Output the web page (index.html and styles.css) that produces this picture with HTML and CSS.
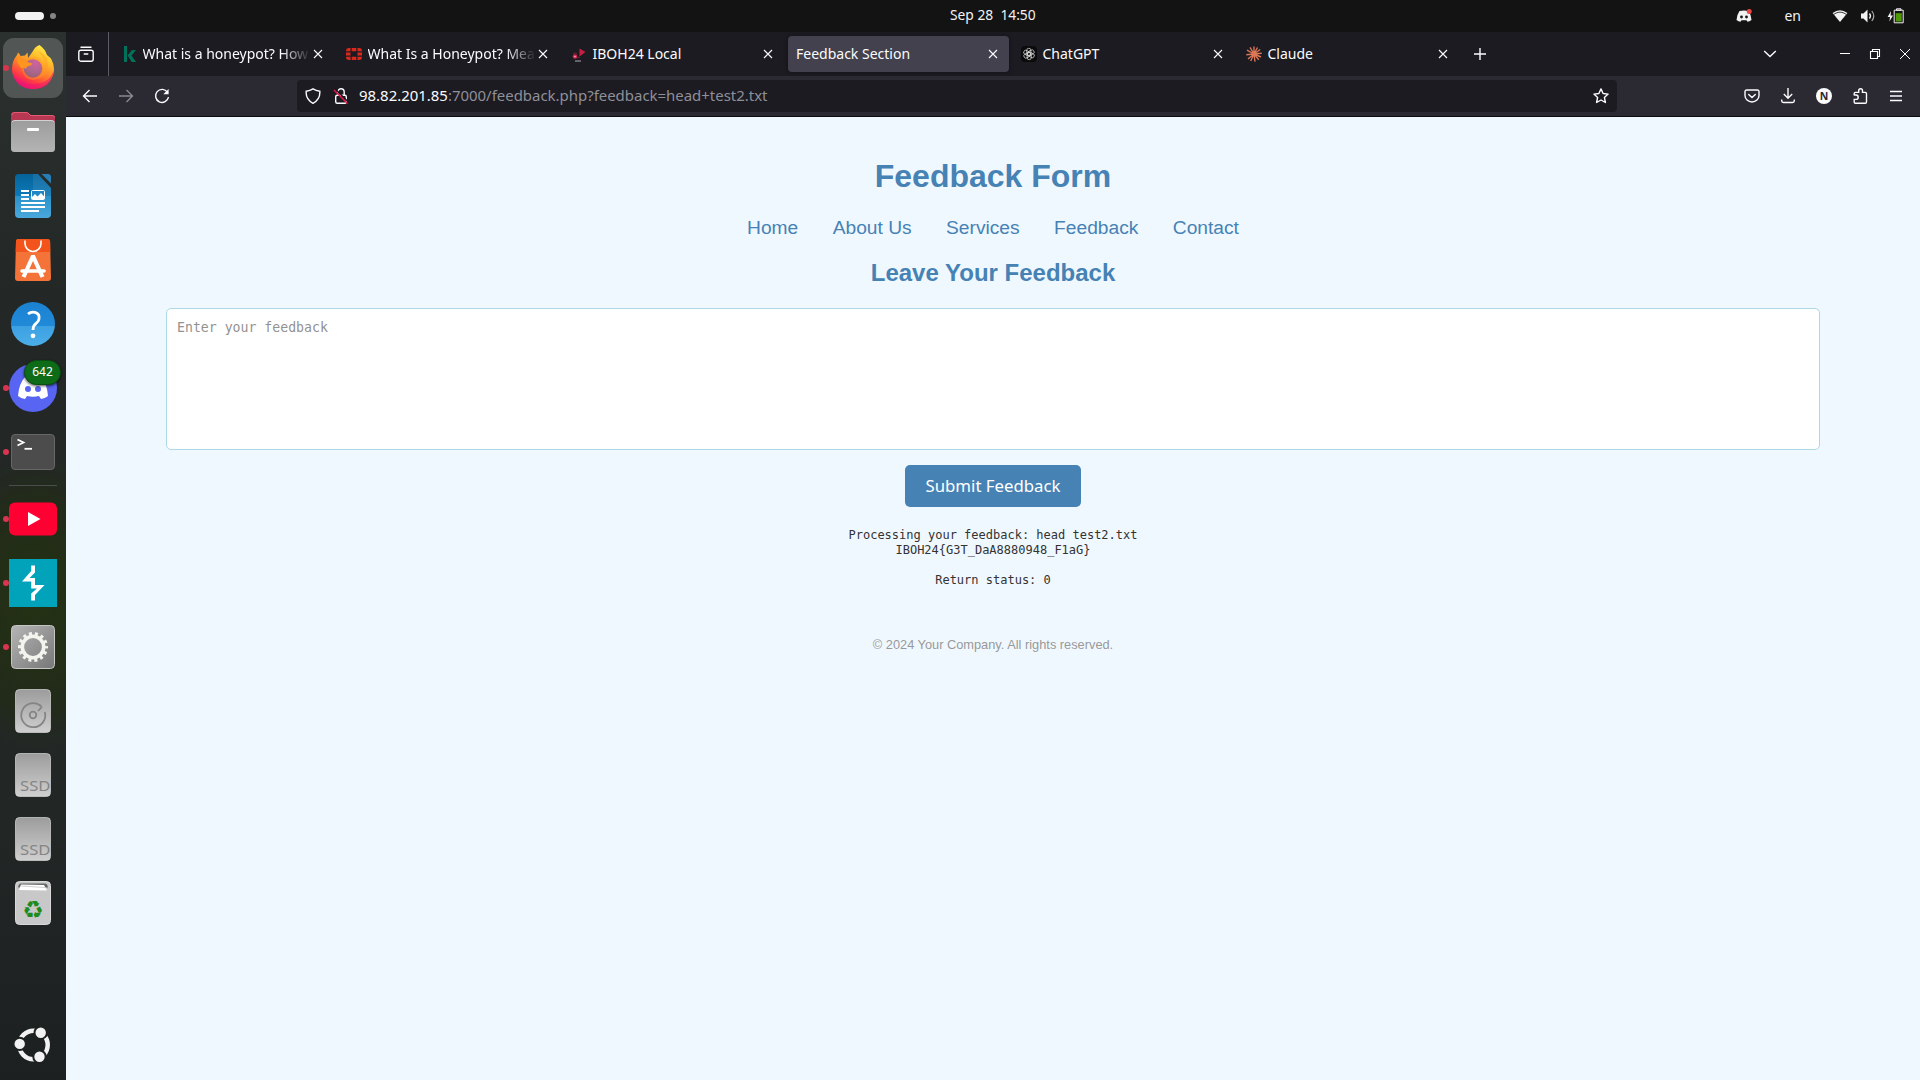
FILE: index.html
```html
<!DOCTYPE html>
<html lang="en">
<head>
<meta charset="utf-8">
<title>Feedback Section</title>
<link rel="stylesheet" href="styles.css">
</head>
<body>
<svg class="defs" width="0" height="0" aria-hidden="true">
  <symbol id="close" viewBox="0 0 10 10"><path d="M1 1l8 8M9 1l-8 8" fill="none" stroke="#fbfbfe" stroke-width="1.1"/></symbol>
  <linearGradient id="metal" x1="0" y1="0" x2="0" y2="1"><stop offset="0" stop-color="#9c9c9c"/><stop offset="1" stop-color="#cfcfcf"/></linearGradient>
  <symbol id="ssd" viewBox="0 0 48 48"><rect x="6.500" y="2.500" width="35" height="43" rx="4" fill="url(#metal)" stroke="#d5d5d5" stroke-opacity=".7"/></symbol>
</svg>

<header class="topbar">
  <div class="workspaces"><span class="pill"></span><span class="dot"></span></div>
  <div class="clock">Sep 28&nbsp; 14:50</div>
  <div class="tray">
    <svg class="tray-discord" width="16" height="14" viewBox="0 0 16 14"><path d="M3.500 2Q8 .8 12.500 2Q15.300 6 15.500 11Q13.500 12.500 11.500 12.700L10.500 11.200H5.500L4.500 12.700Q2.500 12.500 .5 11Q.7 6 3.500 2z" fill="#f2f2f2"/><circle cx="5.500" cy="8" r="1.400" fill="#131313"/><circle cx="10.500" cy="8" r="1.400" fill="#131313"/><circle cx="13.200" cy="2.500" r="2.500" fill="#f04747"/></svg>
    <span class="lang">en</span>
    <svg class="tray-wifi" width="16" height="14" viewBox="0 0 16 14"><path d="M8 13L.6 4Q8-1.500 15.400 4z" fill="#f2f2f2"/><path d="M2 5.200Q8 1 14 5.200" fill="none" stroke="#131313" stroke-width=".8"/></svg>
    <svg class="tray-sound" width="16" height="14" viewBox="0 0 16 14"><path d="M1 4.500h2.500L7.500.5v13L3.500 9.500H1z" fill="#f2f2f2"/><path d="M9.500 4.500q2 2.500 0 5" fill="none" stroke="#f2f2f2" stroke-width="1.300"/><path d="M11.800 2q4 5 0 10" fill="none" stroke="#aaa" stroke-width="1.200"/></svg>
    <svg width="18" height="16" viewBox="0 0 18 16"><path d="M4 3L.6 9H3l-.6 4.500L6 7.500H3.600z" fill="#f2f2f2"/><path d="M7.200 2.200h9v12.600h-9zM9.500.8h4.500v1.400H9.500z" fill="none" stroke="#f2f2f2"/><rect x="8.700" y="5.200" width="6" height="8.300" fill="#4e9a06"/></svg>
  </div>
</header>

<div class="desktop">
  <nav class="dock">
    <div class="slot running focused"><svg viewBox="0 0 48 48">
      <defs><linearGradient id="ff1" x1=".85" y1="0" x2=".35" y2="1"><stop offset="0" stop-color="#fff44f"/><stop offset=".3" stop-color="#ffc12c"/><stop offset=".6" stop-color="#ff7a2b"/><stop offset=".82" stop-color="#ff3647"/><stop offset="1" stop-color="#e01080"/></linearGradient><radialGradient id="ff2" cx=".65" cy=".2" r=".9"><stop offset="0" stop-color="#b33bf0"/><stop offset=".5" stop-color="#7a45d8"/><stop offset="1" stop-color="#4b3ca8"/></radialGradient></defs>
      <path d="M30.500 1Q36 5 38 11L42 14.500Q45 20 45 25C45 36 35.500 45 24 45S3 36 3 25Q3 17 8 11L9 8.500Q11 10 11.500 12L16 11.500L18.500 8.500L19 14Q22 10 24 7Q26 2.500 30.500 1z" fill="url(#ff1)"/>
      <path d="M3.500 27Q6 40 24 40Q40 40 44.500 27Q43 45 24 45Q6 45 3.500 27z" fill="#f0146f" opacity=".55"/>
      <circle cx="24" cy="24.500" r="9.300" fill="url(#ff2)"/>
      <path d="M18 15Q25 11 31 15L34 19Q34 27 33 28Q38 20 33 12L29 7Q33 8 38 14Q42 34 24 36Q13 35 13 23L18 15z" fill="#ff9a22" opacity=".4"/>
      <path d="M8 12L18 15.500L18.500 18L23.500 19.500Q22.500 21.500 19.500 22Q17 23 17 25Q14 23 12 24L9 20z" fill="#ff9420"/>
    </svg></div>
    <div class="slot"><svg viewBox="0 0 48 48">
      <defs><linearGradient id="fd" x1="0" y1="0" x2="0" y2="1"><stop offset="0" stop-color="#9c9c9c"/><stop offset="1" stop-color="#b4b4b4"/></linearGradient></defs>
      <path d="M2 12V7q0-3 3-3h12q2 0 3 1.200L22 7h21q3 0 3 3v6H2z" fill="#b83752"/><path d="M3 7q0-2.500 3-2.500h11q2 0 3 1.500l1.500 1.500H43q2.500 0 2.500 2" fill="none" stroke="#e45a73"/>
      <rect x="2" y="12" width="44" height="32" rx="3.500" fill="url(#fd)"/><path d="M3 14q1-1.500 3-1.500h36q2 0 3 1.500" fill="none" stroke="#d2d2d2"/><rect x="18" y="20" width="12" height="3" rx="1" fill="#fff"/>
    </svg></div>
    <div class="slot"><svg viewBox="0 0 48 48">
      <defs><linearGradient id="wr" x1="0" y1="0" x2="0" y2="1"><stop offset="0" stop-color="#05639a"/><stop offset=".5" stop-color="#0d7ab8"/><stop offset=".5" stop-color="#2a91ca"/><stop offset="1" stop-color="#4aa9dc"/></linearGradient></defs>
      <path d="M10 2h19l13 14v26q0 4-4 4H10q-4 0-4-4V6q0-4 4-4z" fill="url(#wr)"/><path d="M32.500 2H39q3 0 3 3v6.500z" fill="#267eb4"/><path d="M24 2h5l13 14v8H24z" fill="#fff" opacity=".08"/>
      <path d="M12 19h8M12 23h8M12 27h8M12 31h24M12 35h24M12 39h18" stroke="#fff" stroke-width="2"/><rect x="22.500" y="18.500" width="13" height="9" rx="1" fill="#1f88c4" stroke="#fff"/><path d="M23 27v-2l3-3 2.500 2.500L32 21l3.500 4v2z" fill="#fff"/>
    </svg></div>
    <div class="slot"><svg viewBox="0 0 48 48">
      <path d="M9.500 3h29q2.500 0 2.600 2.500L42 42q0 3-3 3H9q-3 0-3-3L7 5.500Q7 3 9.500 3z" fill="#f37338"/><path d="M9.500 3h29q2.500 0 2.600 2.500L41.300 16H6.700L7 5.500Q7 3 9.500 3z" fill="#f3541b"/>
      <path d="M16 4.500v3a8 8 0 0 0 16 0v-3" fill="none" stroke="#fff" stroke-width="1.600"/><path d="M22.300 21h3.400M24 20L14.500 41M24 20L33.500 41" fill="none" stroke="#fff" stroke-width="4.200"/><path d="M13 35h22" stroke="#fff" stroke-width="3.600" stroke-linecap="round"/>
    </svg></div>
    <div class="slot"><svg viewBox="0 0 48 48">
      <defs><linearGradient id="hp" x1="0" y1="0" x2="0" y2="1"><stop offset="0" stop-color="#1b82d2"/><stop offset=".54" stop-color="#218ad8"/><stop offset=".55" stop-color="#3da0e2"/><stop offset="1" stop-color="#4bafe9"/></linearGradient></defs>
      <circle cx="24" cy="24" r="22" fill="url(#hp)"/><path d="M19 14Q22 11.500 26 12.400Q31 14 30 19Q29.500 21.500 27 23.500Q24 25.500 24 30" fill="none" stroke="#fff" stroke-width="2.800"/><circle cx="24" cy="35.800" r="2.400" fill="#fff"/>
    </svg></div>
    <div class="slot running"><svg viewBox="0 0 48 48">
      <circle cx="24" cy="24" r="24" fill="#5865f2"/><path d="M16.500 12.500Q24 10.500 31.500 12.500Q38 19 39 32Q36 34.500 32 35L30 32Q24 33.500 18 32L16 35Q12 34.500 9 32Q10 19 16.500 12.500z" fill="#fff"/><circle cx="19" cy="25" r="3" fill="#5865f2"/><circle cx="29" cy="25" r="3" fill="#5865f2"/>
    </svg><span class="badge">642</span></div>
    <div class="slot running"><svg viewBox="0 0 48 48">
      <rect x="2.500" y="6.500" width="43" height="35" rx="3.500" fill="#4c4c4c" stroke="#666"/><path d="M8.500 11.500l6 3-6 3" fill="none" stroke="#fff" stroke-width="1.800"/><path d="M15.500 20.800h7.500" stroke="#fff" stroke-width="1.800"/>
    </svg></div>
    <div class="divider"></div>
    <div class="slot running"><svg viewBox="0 0 48 48">
      <rect x="0" y="7.500" width="48" height="33" rx="6" fill="#ff0033"/><path d="M19 17l12.500 7L19 31z" fill="#fff"/>
    </svg></div>
    <div class="slot running"><svg viewBox="0 0 48 48">
      <rect width="48" height="48" fill="#00a3ba"/><path d="M22.200 6.500H26V13.500L20.500 19H26V26H35.500L26 36V41.500H22.200V34.500L28 29.500H22.200V22.500H13L22.200 12z" fill="#fff"/>
    </svg></div>
    <div class="slot running"><svg viewBox="0 0 48 48">
      <defs><linearGradient id="st" x1="0" y1="0" x2="1" y2="1"><stop offset="0" stop-color="#b5b5b5"/><stop offset="1" stop-color="#777"/></linearGradient></defs>
      <rect x="2.500" y="2.500" width="43" height="43" rx="4" fill="url(#st)" stroke="#c5c5c5"/><circle cx="24" cy="24" r="10.700" fill="none" stroke="#f4f4ee" stroke-width="3.600"/><circle cx="24" cy="24" r="13.300" fill="none" stroke="#f4f4ee" stroke-width="3.400" stroke-dasharray="2.980 2.989" stroke-dashoffset="1.500"/>
    </svg></div>
    <div class="slot"><svg viewBox="0 0 48 48">
      <use href="#ssd"/><path d="M32.500 19.500A12 12 0 1 0 35.800 25M33 19.800l-4 4.200" fill="none" stroke="#858585" stroke-width="1.800"/><circle cx="24" cy="28" r="3.300" fill="none" stroke="#858585" stroke-width="1.800"/>
    </svg></div>
    <div class="slot"><svg viewBox="0 0 48 48"><use href="#ssd"/><text class="ssd-label" x="11" y="40" textLength="30.500" lengthAdjust="spacingAndGlyphs">SSD</text></svg></div>
    <div class="slot"><svg viewBox="0 0 48 48"><use href="#ssd"/><text class="ssd-label" x="11" y="40" textLength="30.500" lengthAdjust="spacingAndGlyphs">SSD</text></svg></div>
    <div class="slot"><svg viewBox="0 0 48 48">
      <rect x="6.500" y="2.500" width="35" height="43" rx="4" fill="#c8c8c8" stroke="#d8d8d8"/><path d="M9 8.500q.5-4 3-4h24q2.500 0 3 4" fill="#666"/><path d="M10 11l2-5.500 23 .5 3 5.500z" fill="#fff"/><path d="M12 7l24 1.500" stroke="#bbb" stroke-width=".7"/>
      <text class="recycle" x="24" y="38.500">♻</text>
    </svg></div>
    <div class="slot apps"><svg viewBox="0 0 48 48">
      <circle cx="24.500" cy="24" r="14.200" fill="none" stroke="#f2f2f2" stroke-width="4.500"/><g fill="#f2f2f2" stroke="#1e2221" stroke-width="2"><circle cx="31.700" cy="11.700" r="6.200"/><circle cx="10.700" cy="22.900" r="6.200"/><circle cx="30.500" cy="35.700" r="6.200"/></g>
    </svg></div>
  </nav>

  <main class="window">
    <div class="tabstrip">
      <div class="view"><svg width="16" height="16" viewBox="0 0 16 16" fill="none" stroke="#fbfbfe" stroke-width="1.400"><rect x=".8" y="4.200" width="14.400" height="11" rx="2"/><path d="M3 1.200h10M6.200 8h3.600" stroke-linecap="round"/></svg></div>
      <div class="tabs">
        <div class="tab"><svg class="fav" viewBox="0 0 16 16"><path d="M3 0h3v16H3zM11 4h4L10.500 9.500l4.500 6.500h-4.300L7 10v-1z" fill="#00725a"/></svg><span class="label fade">What is a honeypot? How</span><svg class="x"><use href="#close"/></svg></div>
        <div class="tab"><svg class="fav" viewBox="0 0 16 16"><path d="M0 5q0-3 3-3h1.500v3.200H0zM5.700 2h4.600v3.200H5.700zM11.500 2H13q3 0 3 3v.2h-4.500zM0 6.400h4.500v3.200H0zM11.500 6.400H16v3.200h-4.500zM0 10.800h4.500V14H3q-3 0-3-3zM5.700 10.800h4.600V14H5.700zM11.500 10.800H16q0 3.200-3 3.200h-1.500z" fill="#da291c"/></svg><span class="label fade">What Is a Honeypot? Mea</span><svg class="x"><use href="#close"/></svg></div>
        <div class="tab"><svg class="fav" viewBox="0 0 16 16"><path d="M8.500 2.500l6 3.500-6 4.500z" fill="#c91f42"/><circle cx="4" cy="10.500" r="2.300" fill="#d12c4c"/><circle cx="4" cy="10.500" r=".8" fill="#f6b9c4"/><path d="M2 7.500q2-1 4 0M6 12l3-1" stroke="#7c2036"/><path d="M4 15h6" stroke="#ababb0"/></svg><span class="label">IBOH24 Local</span><svg class="x"><use href="#close"/></svg></div>
        <div class="tab selected"><span class="label">Feedback Section</span><svg class="x"><use href="#close"/></svg></div>
        <div class="tab"><svg class="fav" viewBox="0 0 16 16"><rect width="16" height="16" rx="4" fill="#0b0b0b"/><g fill="none" stroke="#d8d8d8" stroke-width=".75"><rect x="5.700" y="2.300" width="4.200" height="7.200" rx="2"/><rect x="5.700" y="2.300" width="4.200" height="7.200" rx="2" transform="rotate(60 8 8)"/><rect x="5.700" y="2.300" width="4.200" height="7.200" rx="2" transform="rotate(120 8 8)"/><rect x="5.700" y="2.300" width="4.200" height="7.200" rx="2" transform="rotate(180 8 8)"/><rect x="5.700" y="2.300" width="4.200" height="7.200" rx="2" transform="rotate(240 8 8)"/><rect x="5.700" y="2.300" width="4.200" height="7.200" rx="2" transform="rotate(300 8 8)"/></g></svg><span class="label">ChatGPT</span><svg class="x"><use href="#close"/></svg></div>
        <div class="tab"><svg class="fav" viewBox="0 0 16 16"><path d="M8 8V.5M8 8l3.500-6.500M8 8l6.200-4.500M8 8l7.700-.8M8 8l7 3M8 8l4.800 5.800M8 8l1 7.700M8 8l-3.300 7M8 8l-6 5M8 8l-7.700.8M8 8L1 4.200M8 8L4 1.300" stroke="#d97757" stroke-width="1.400"/></svg><span class="label">Claude</span><svg class="x"><use href="#close"/></svg></div>
      </div>
      <svg class="newtab" width="12" height="12" viewBox="0 0 12 12"><path d="M6 0v12M0 6h12" stroke="#fbfbfe" stroke-width="1.400"/></svg>
      <div class="winctl">
        <svg class="chev" width="14" height="8" viewBox="0 0 14 8"><path d="M1.200 1l5.800 5.600L12.800 1" fill="none" stroke="#fbfbfe" stroke-width="1.400"/></svg>
        <svg width="12" height="12" viewBox="0 0 12 12"><path d="M1 5.500h10" stroke="#fff"/></svg>
        <svg width="12" height="12" viewBox="0 0 12 12"><path d="M1.500 3.500h7v7h-7zM3.500 3.500v-2h7v7h-2" fill="none" stroke="#fff" stroke-width="1.100"/></svg>
        <svg width="12" height="12" viewBox="0 0 12 12"><path d="M1 1l10 10M11 1L1 11" stroke="#fff"/></svg>
      </div>
    </div>

    <div class="toolbar">
      <div class="navbtns">
        <svg viewBox="0 0 16 16"><path d="M15 8H1.500M7.500 2L1.500 8l6 6"/></svg>
        <svg class="dim" viewBox="0 0 16 16"><path d="M1 8h13.500M8.500 2l6 6-6 6"/></svg>
        <svg viewBox="0 0 16 16"><path d="M13.500 4.300A6.500 6.500 0 1 0 14.500 9"/><path d="M14.600 1v5.300H9.300z" fill="#fbfbfe" stroke="none"/></svg>
      </div>
      <div class="urlbar">
        <svg viewBox="0 0 16 16"><path d="M8 .9Q11 2.800 14.800 3.200Q15.500 11.500 8 15.300Q.5 11.500 1.200 3.200Q5 2.800 8 .9z"/></svg>
        <svg viewBox="0 0 16 16"><path d="M4.800 7V4a3.200 3.200 0 0 1 6.400 0v3"/><rect x="2.700" y="7.200" width="10.600" height="8" rx="1.500"/><path d="M2 .8l13 13" stroke="#1c1b22" stroke-width="1.600"/><path d="M1 2l13.500 13.500" stroke="#e8174b" stroke-width="1.500"/></svg>
        <span class="url"><b>98.82.201.85</b>:7000/feedback.php?feedback=head+test2.txt</span>
        <svg class="star" viewBox="0 0 16 16"><path d="M8 .9l2.100 4.600 5 .6-3.700 3.400 1 5-4.400-2.500-4.400 2.500 1-5L.9 6.100l5-.6z" stroke-linejoin="round"/></svg>
      </div>
      <div class="actions">
        <svg viewBox="0 0 16 16"><path d="M2.800 2h10.400q1.800 0 1.800 1.800V7.500a7 6.500 0 0 1-14 0V3.800Q1 2 2.800 2z"/><path d="M4.700 6.400L8 9.500l3.300-3.100" stroke-linecap="round"/></svg>
        <svg viewBox="0 0 16 16"><path d="M8 0v10M3.800 6L8 10.200 12.200 6M1.700 11.500v1.300q0 1.700 1.700 1.700h9.200q1.700 0 1.700-1.700v-1.300"/></svg>
        <svg viewBox="0 0 16 16"><circle cx="8" cy="8" r="8" fill="#fbfbfe" stroke="none"/><text class="initial" x="8" y="12">N</text></svg>
        <svg viewBox="0 0 16 16"><path d="M2.200 7V5.600q0-1.200 1.200-1.200h3.300V2.600a1.900 1.900 0 0 1 3.800 0v1.800h2.800q1.200 0 1.200 1.200v8.400q0 1.200-1.200 1.200H3.400q-1.200 0-1.200-1.200v-2.600h1.800a1.900 1.900 0 0 0 0-4.400H1.700"/></svg>
        <svg viewBox="0 0 16 16"><path d="M2 3.500h12M2 8h12M2 12.500h12"/></svg>
      </div>
    </div>

    <section class="page">
      <h1>Feedback Form</h1>
      <nav class="links"><a>Home</a> <a>About Us</a> <a>Services</a> <a>Feedback</a> <a>Contact</a></nav>
      <h2>Leave Your Feedback</h2>
      <textarea class="field" placeholder="Enter your feedback"></textarea>
      <button class="submit">Submit Feedback</button>
      <pre class="output">Processing your feedback: head test2.txt
IBOH24{G3T_DaA8880948_F1aG}

Return status: 0</pre>
      <footer class="copyright">© 2024 Your Company. All rights reserved.</footer>
    </section>
  </main>
</div>
</body>
</html>
```

FILE: styles.css
```css
* { box-sizing: border-box; }

body {
  margin: 0;
  width: 1920px;
  height: 1080px;
  display: flex;
  flex-direction: column;
  overflow: hidden;
  background: #131313;
  color: #fbfbfe;
  font-family: "Noto Sans", "Open Sans", sans-serif;
  font-size: 14px;
}

svg { display: block; flex: none; }
.defs { position: absolute; }

/* GNOME top bar */
.topbar {
  height: 32px;
  flex: none;
  display: grid;
  grid-template-columns: 1fr auto 1fr;
  align-items: center;
  padding: 0 15px;
  color: #f2f2f2;
}
.workspaces { display: flex; align-items: center; gap: 6px; }
.pill { width: 29px; height: 8px; border-radius: 4px; background: #f2f2f2; }
.dot { width: 6px; height: 6px; border-radius: 50%; background: #848484; }
.clock { width: 86px; margin-left: 66px; line-height: 30px; height: 32px; white-space: nowrap; font-size: 13.800px; }
.tray { display: flex; align-items: center; justify-content: flex-end; }
.tray-discord { margin-right: 32px; }
.lang { margin-right: 31px; line-height: 30px; }
.tray-wifi { margin-right: 12px; }
.tray-sound { margin-right: 11px; }

.desktop { flex: 1; display: flex; min-height: 0; }

/* Dock */
.dock {
  width: 66px;
  flex: none;
  display: flex;
  flex-direction: column;
  padding: 4px 0 3px;
  background:
    radial-gradient(ellipse 100px 150px at 35px 570px, rgba(36, 50, 18, .95), rgba(34, 44, 20, .7) 70%, transparent 100%),
    linear-gradient(#2b312f, #232827 25%, #222726 75%, #1c2020);
}
.slot {
  position: relative;
  height: 64px;
  flex: none;
  display: flex;
  align-items: center;
  justify-content: center;
}
.slot svg { width: 48px; height: 48px; position: relative; }
.running::before {
  content: "";
  position: absolute;
  left: 3px;
  top: 29px;
  width: 6px;
  height: 6px;
  border-radius: 50%;
  background: #da3450;
  z-index: 1;
}
.focused::after {
  content: "";
  position: absolute;
  inset: 2px 3px;
  border-radius: 11px;
  background: rgba(255, 255, 255, .19);
}
.focused svg { z-index: 1; }
.badge {
  position: absolute;
  left: 24px;
  top: 4px;
  width: 37px;
  height: 25px;
  border: 1px solid #0a4f12;
  border-radius: 13px;
  background: #0e6b18;
  box-shadow: 0 1px 3px rgba(0, 0, 0, .7);
  color: #fff;
  font-size: 12px;
  line-height: 22px;
  text-align: center;
}
.divider { height: 1px; margin: 1px 9px; background: #494d4c; flex: none; }
.apps { margin-top: auto; }
.ssd-label { font: 14.500px "Noto Sans", sans-serif; fill: #858585; }
.recycle { font: 24px "DejaVu Sans", sans-serif; fill: #1f8b1f; text-anchor: middle; }

/* Browser window */
.window { flex: 1; display: flex; flex-direction: column; min-width: 0; }
.tabstrip { height: 44px; flex: none; display: flex; align-items: center; background: #1c1b22; }
.view {
  width: 43px;
  height: 44px;
  display: flex;
  align-items: center;
  padding-left: 12px;
  border-right: 1px solid #5b5b66;
}
.tabs { display: flex; gap: 4px; padding: 0 0 0 4px; }
.tab {
  width: 221px;
  height: 36px;
  display: flex;
  align-items: center;
  padding: 0 11px 0 8px;
  border-radius: 4px;
}
.selected { background: #42414d; box-shadow: 0 0 4px rgba(0, 0, 0, .4); }
.fav { width: 16px; height: 16px; margin-right: 5.500px; }
.label { flex: 1; white-space: nowrap; line-height: 36px; height: 36px; }
.fade { -webkit-mask-image: linear-gradient(to left, transparent 2px, #000 32px); mask-image: linear-gradient(to left, transparent 2px, #000 32px); }
.x { width: 10px; height: 10px; }
.newtab { margin-left: 15px; }
.winctl { margin-left: auto; display: flex; align-items: center; gap: 18px; padding-right: 9px; }
.chev { margin-right: 44px; }

.toolbar {
  height: 41px;
  flex: none;
  display: flex;
  align-items: center;
  background: #2b2a33;
  border-bottom: 1px solid #0c0c0d;
}
.toolbar svg { width: 16px; height: 16px; fill: none; stroke: #fbfbfe; stroke-width: 1.400; }
.navbtns { width: 231px; display: flex; gap: 20px; padding-left: 16px; }
.toolbar .dim { opacity: .45; }
.urlbar {
  width: 1320px;
  height: 32px;
  display: flex;
  align-items: center;
  gap: 12px;
  padding: 0 8px;
  border-radius: 4px;
  background: #1c1b22;
}
.url { flex: 1; margin-left: -2px; font-size: 14.950px; line-height: 31px; height: 32px; color: #8f8f98; white-space: nowrap; }
.url b { font-weight: 400; color: #fbfbfe; }
.actions { margin-left: auto; display: flex; gap: 20px; padding-right: 16px; }
.toolbar .initial { font: bold 10.500px "Noto Sans", sans-serif; fill: #2b2a33; stroke: none; text-anchor: middle; }

/* Web page */
.page {
  flex: 1;
  display: flex;
  flex-direction: column;
  align-items: center;
  padding: 41px 100px 0;
  background: #f0f8ff;
  color: #333;
  font-family: "Liberation Sans", Arial, sans-serif;
}
h1, h2 { margin: 0; color: #4682b4; }
h1 { font-size: 32px; line-height: 36px; }
.links { height: 22px; margin-top: 23px; font-size: 16px; line-height: 22px; white-space: nowrap; }
.links a { margin: 0 15px; font-size: 19.200px; color: #4682b4; }
h2 { margin-top: 20px; font-size: 24px; line-height: 28px; }
.field {
  width: 100%;
  height: 142px;
  margin-top: 21px;
  padding: 11px 10px 10px;
  border: 1px solid #add8e6;
  border-radius: 5px;
  background: #fff;
  font: 13.200px/16px "DejaVu Sans Mono", monospace;
  resize: none;
  outline: none;
}
.field::placeholder { color: #929292; }
.submit {
  width: 176px;
  height: 42px;
  margin-top: 15px;
  padding: 0 0 1px;
  border: 0;
  border-radius: 5px;
  background: #4682b4;
  color: #fff;
  font: 16.800px "Noto Sans", sans-serif;
}
.output { margin: 21px 0 0; font: 12px/15px "DejaVu Sans Mono", monospace; text-align: center; color: #333; }
.copyright { margin-top: 49px; font-size: 12.800px; line-height: 16px; color: #999; }
```
